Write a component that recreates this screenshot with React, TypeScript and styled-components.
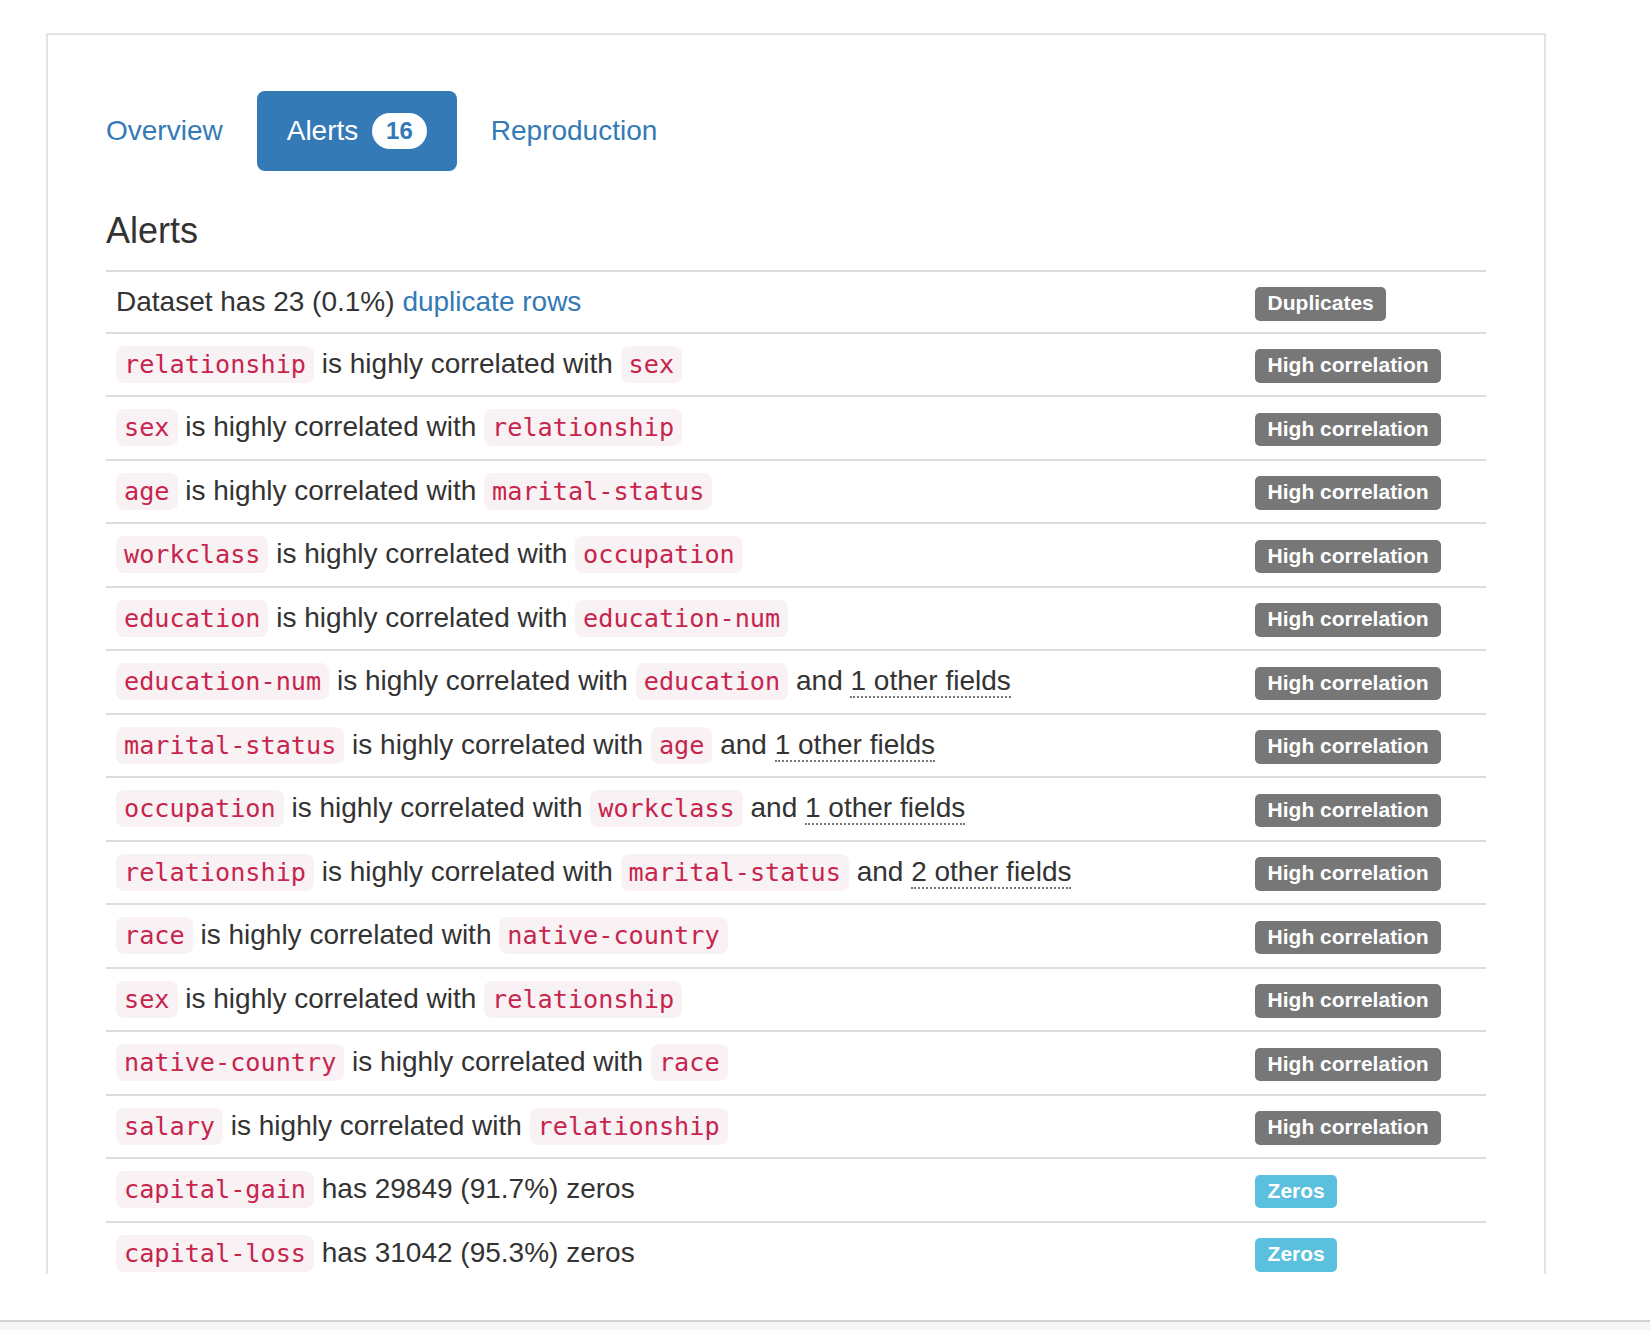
import React from "react";
import styled, { createGlobalStyle } from "styled-components";

const GlobalStyle = createGlobalStyle`
  html, body {
    margin: 0;
    padding: 0;
    background: #fff;
    overflow: hidden;
  }
  body {
    font-family: "Liberation Sans", Arial, Helvetica, sans-serif;
    color: #333;
    font-size: 28px;
  }
`;

const Page = styled.div`
  width: 1650px;
  height: 1330px;
  display: flex;
  flex-direction: column;
`;

const Panel = styled.section`
  box-sizing: border-box;
  margin: 33px 0 0 46px;
  width: 1500px;
  height: 1241px;
  border: 2px solid #e2e2e8;
  border-bottom: none;
  padding: 56px 58px 0 58px;
  overflow: hidden;
  flex: none;
`;

const Nav = styled.ul`
  list-style: none;
  display: flex;
  gap: 4px;
  margin: 0 0 0 -30px;
  padding: 0;
`;

const TabLink = styled.a<{ $active?: boolean }>`
  display: block;
  padding: 20px 30px;
  line-height: 40px;
  font-size: 28px;
  border-radius: 8px;
  text-decoration: none;
  color: ${(p) => (p.$active ? "#fff" : "#337ab7")};
  background: ${(p) => (p.$active ? "#337ab7" : "transparent")};
  white-space: nowrap;
`;

const Badge = styled.span`
  display: inline-block;
  margin-left: 6px;
  padding: 6px 14px;
  font-size: 24px;
  font-weight: 700;
  line-height: 1;
  color: #337ab7;
  background: #fff;
  border-radius: 20px;
  vertical-align: middle;
  position: relative;
  top: -2px;
`;

const Heading = styled.h4`
  margin: 40px 0 19px 0;
  font-size: 36px;
  font-weight: 500;
  line-height: 1.1;
  color: #333;
`;

const Table = styled.div`
  width: 1380px;
  border-top: 2px solid #ddd;
`;

const Row = styled.div`
  display: grid;
  grid-template-columns: 1fr 241px;
  & + & {
    border-top: 2px solid #ddd;
  }
`;

const Cell = styled.div`
  padding: 10px;
  font-size: 28px;
  line-height: 40px;
  white-space: nowrap;
`;

const Code = styled.code`
  font-family: "DejaVu Sans Mono", Menlo, Monaco, monospace;
  font-size: 90%;
  line-height: 41.5px;
  padding: 4px 8px;
  color: #c7254e;
  background: #f9f2f4;
  border-radius: 8px;
`;

const Link = styled.a`
  color: #337ab7;
  text-decoration: none;
`;

const Abbr = styled.abbr`
  text-decoration: none;
  border-bottom: 2px dotted #777;
  cursor: help;
`;

const Label = styled.span<{ $kind: "default" | "info" }>`
  display: inline;
  padding: 0.2em 0.6em 0.3em;
  font-size: 21px;
  font-weight: 700;
  line-height: 1;
  color: #fff;
  background: ${(p) => (p.$kind === "info" ? "#5bc0de" : "#777")};
  border-radius: 5px;
  white-space: nowrap;
`;

const Spacer = styled.div`
  height: 46px;
  flex: none;
`;

const Footer = styled.footer`
  flex: 1;
  border-top: 2px solid #d3d3d3;
  background: #f5f5f5;
`;

type Corr = { a: string; b: string; more?: number };

const correlations: Corr[] = [
  { a: "relationship", b: "sex" },
  { a: "sex", b: "relationship" },
  { a: "age", b: "marital-status" },
  { a: "workclass", b: "occupation" },
  { a: "education", b: "education-num" },
  { a: "education-num", b: "education", more: 1 },
  { a: "marital-status", b: "age", more: 1 },
  { a: "occupation", b: "workclass", more: 1 },
  { a: "relationship", b: "marital-status", more: 2 },
  { a: "race", b: "native-country" },
  { a: "sex", b: "relationship" },
  { a: "native-country", b: "race" },
  { a: "salary", b: "relationship" },
];

const zeros = [
  { col: "capital-gain", n: "29849", pct: "91.7%" },
  { col: "capital-loss", n: "31042", pct: "95.3%" },
];

export default function App() {
  return (
    <Page>
      <GlobalStyle />
      <Panel>
        <Nav>
          <li>
            <TabLink href="#overview">Overview</TabLink>
          </li>
          <li>
            <TabLink href="#alerts" $active>
              Alerts <Badge>16</Badge>
            </TabLink>
          </li>
          <li>
            <TabLink href="#reproduction">Reproduction</TabLink>
          </li>
        </Nav>
        <Heading>Alerts</Heading>
        <Table>
          <Row>
            <Cell>
              Dataset has 23 (0.1%) <Link href="#dup">duplicate rows</Link>
            </Cell>
            <Cell>
              <Label $kind="default">Duplicates</Label>
            </Cell>
          </Row>
          {correlations.map((c, i) => (
            <Row key={i}>
              <Cell>
                <Code>{c.a}</Code> is highly correlated with <Code>{c.b}</Code>
                {c.more ? (
                  <>
                    {" "}and <Abbr title="other fields">{c.more} other fields</Abbr>
                  </>
                ) : null}
              </Cell>
              <Cell>
                <Label $kind="default">High correlation</Label>
              </Cell>
            </Row>
          ))}
          {zeros.map((z) => (
            <Row key={z.col}>
              <Cell>
                <Code>{z.col}</Code> has {z.n} ({z.pct}) zeros
              </Cell>
              <Cell>
                <Label $kind="info">Zeros</Label>
              </Cell>
            </Row>
          ))}
        </Table>
      </Panel>
      <Spacer />
      <Footer />
    </Page>
  );
}
